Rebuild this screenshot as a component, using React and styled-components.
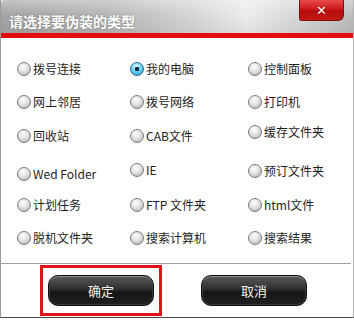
import styled, { createGlobalStyle } from "styled-components";

const GlobalStyle = createGlobalStyle`
  html, body {
    margin: 0;
    padding: 0;
    background: #ffffff;
  }
  body {
    font-family: "Noto Sans CJK SC", "Noto Sans", sans-serif;
  }
`;

const options = [
  { label: "拨号连接" },
  { label: "我的电脑", checked: true },
  { label: "控制面板" },
  { label: "网上邻居" },
  { label: "拨号网络" },
  { label: "打印机" },
  { label: "回收站" },
  { label: "CAB文件" },
  { label: "缓存文件夹", nudge: -4 },
  { label: "Wed Folder", nudge: 3 },
  { label: "IE", nudge: -1 },
  { label: "预订文件夹" },
  { label: "计划任务" },
  { label: "FTP 文件夹" },
  { label: "html文件" },
  { label: "脱机文件夹" },
  { label: "搜索计算机" },
  { label: "搜索结果" },
];

function App() {
  return (
    <>
      <GlobalStyle />
      <Window>
        <TitleBar>
          <Title>请选择要伪装的类型</Title>
          <CloseButton>✕</CloseButton>
        </TitleBar>
        <Body>
          <OptionGrid>
            {options.map((opt, idx) => (
              <Option key={idx} $nudge={opt.nudge || 0}>
                <Radio $checked={opt.checked} />
                <Label>{opt.label}</Label>
              </Option>
            ))}
          </OptionGrid>
          <Footer>
            <FocusRing>
              <GlossButton>确定</GlossButton>
            </FocusRing>
            <GlossButton>取消</GlossButton>
          </Footer>
        </Body>
      </Window>
    </>
  );
}

const Window = styled.div`
  width: 352px;
  height: 317px;
  border-left: 1px solid #9a9a9a;
  border-right: 1px solid #b4b4b4;
  border-bottom: 1px solid #4a4a4a;
  display: flex;
  flex-direction: column;
  background: #fff;
`;

const TitleBar = styled.div`
  position: relative;
  height: 33px;
  border-bottom: 5px solid #e30d0d;
  border-top-left-radius: 4px;
  background:
    linear-gradient(to bottom, rgba(255, 255, 255, 0.35), rgba(255, 255, 255, 0) 45%, rgba(0, 0, 0, 0.05)),
    linear-gradient(to right, #a4a4a4 0%, #b6b6b6 30%, #d6d6d6 55%, #ececec 70%, #dadada 82%, #bdbdbd 100%);
  display: flex;
  align-items: center;
  padding-left: 8px;
`;

const Title = styled.div`
  color: #ffffff;
  font-size: 14px;
  font-weight: bold;
  letter-spacing: 0;
  margin-top: 8px;
  text-shadow: 0 0 2px rgba(0, 0, 0, 0.35);
`;

const CloseButton = styled.div`
  position: absolute;
  top: 0;
  right: 9px;
  width: 45px;
  height: 21px;
  box-sizing: border-box;
  border: 1px solid #7a1010;
  border-top: none;
  border-radius: 0 0 6px 3px;
  background: linear-gradient(to bottom, #e84c4c 0%, #cf1a1a 45%, #b30c0c 55%, #c41818 100%);
  color: #ffffff;
  font-family: "DejaVu Sans", sans-serif;
  font-weight: bold;
  font-size: 13px;
  display: flex;
  align-items: center;
  justify-content: center;
  text-shadow: 0 0 2px rgba(0, 0, 0, 0.4);
`;

const Body = styled.div`
  flex: 1;
  display: flex;
  flex-direction: column;
`;

const OptionGrid = styled.div`
  display: grid;
  grid-template-columns: 113px 118px 1fr;
  grid-template-rows: 33px 33px 35px 35px 33px 33px;
  padding: 14px 0 0 16px;
  height: 226px;
  box-sizing: border-box;
  border-bottom: 1px solid #a0a0a0;
  margin-right: 2px;
`;

const Option = styled.div`
  display: flex;
  align-items: center;
  gap: 2px;
  margin-top: ${(p) => p.$nudge * 2}px;
`;

const Radio = styled.span`
  width: 14px;
  height: 14px;
  box-sizing: border-box;
  border-radius: 50%;
  border: 1px solid ${(p) => (p.$checked ? "#2a6b93" : "#7c7c7c")};
  background: ${(p) =>
    p.$checked
      ? "radial-gradient(circle at 50% 50%, #0b2c44 0 2px, transparent 2.5px), radial-gradient(circle at 45% 30%, #e6fbff 0%, #6fd2f5 45%, #1b8fcf 100%)"
      : "radial-gradient(circle at 42% 32%, #ffffff 0%, #e2e2e2 45%, #a9a9a9 100%)"};
  flex-shrink: 0;
`;

const Label = styled.span`
  font-size: 12px;
  color: #1e1e1e;
  white-space: nowrap;
`;

const Footer = styled.div`
  flex: 1;
  display: flex;
  align-items: center;
  padding-left: 39px;
  gap: 39px;
  padding-bottom: 1px;
`;

const FocusRing = styled.div`
  border: 3px solid #e0121a;
  padding: 7px 5px;
`;

const GlossButton = styled.div`
  width: 106px;
  height: 31px;
  box-sizing: border-box;
  border-radius: 10px;
  border: 1px solid #111;
  box-shadow: inset 0 1px 0 #8c8c8c, inset 0 0 0 1px #3a3a3a;
  background: linear-gradient(to bottom, #5a5a5a 0%, #2e2e2e 45%, #151515 55%, #202020 100%);
  color: #f2f2f2;
  font-size: 13px;
  display: flex;
  align-items: center;
  justify-content: center;
`;

export default App;
